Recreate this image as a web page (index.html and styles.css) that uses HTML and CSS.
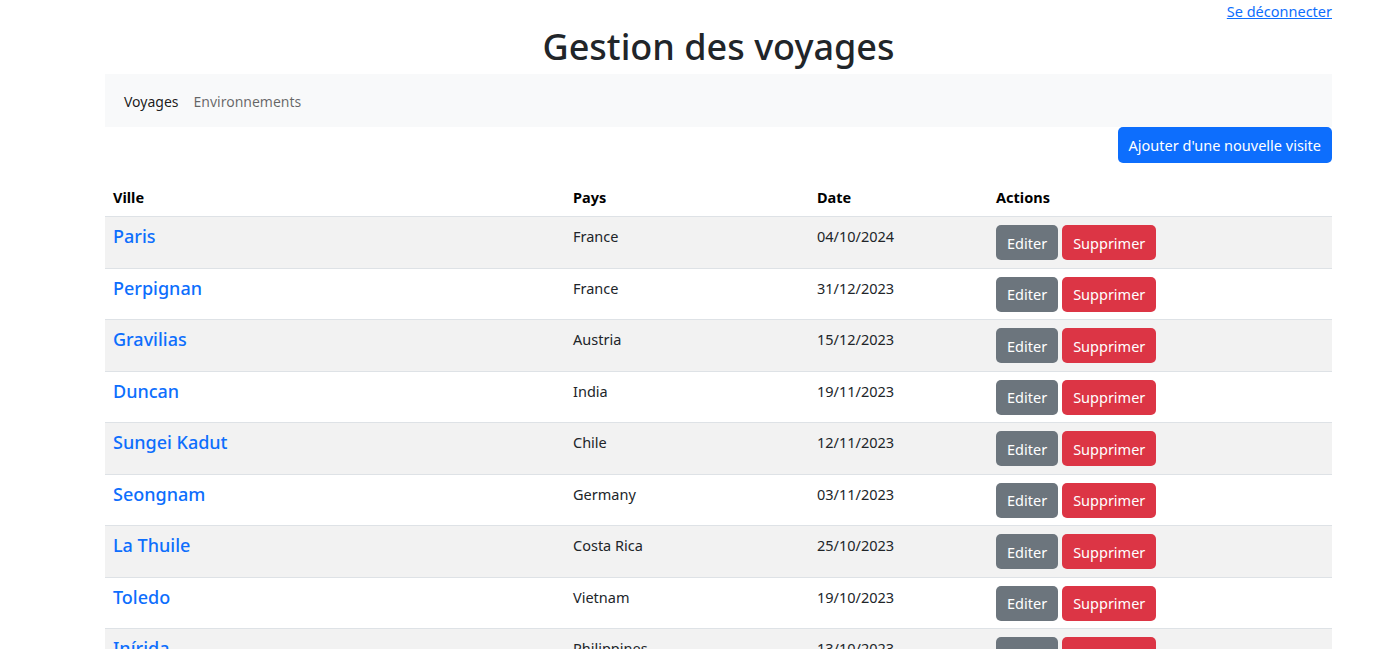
FILE: index.html
```html
<!DOCTYPE html>
<html lang="fr">
<head>
<meta charset="utf-8">
<title>Gestion des voyages</title>
<link rel="stylesheet" href="styles.css">
</head>
<body>
<div class="page">
  <div class="topbar"><a href="#" class="logout">Se déconnecter</a></div>
  <h1 class="title">Gestion des voyages</h1>
  <nav class="navbar">
    <a href="#" class="nav-link active">Voyages</a>
    <a href="#" class="nav-link">Environnements</a>
  </nav>
  <div class="toolbar"><button class="btn btn-primary">Ajouter d'une nouvelle visite</button></div>
  <table class="table">
    <thead>
      <tr><th class="c-ville">Ville</th><th class="c-pays">Pays</th><th class="c-date">Date</th><th class="c-actions">Actions</th></tr>
    </thead>
    <tbody>
      <tr><td><a href="#" class="city">Paris</a></td><td>France</td><td>04/10/2024</td><td><div class="actions"><button class="btn btn-secondary">Editer</button><button class="btn btn-danger">Supprimer</button></div></td></tr>
      <tr><td><a href="#" class="city">Perpignan</a></td><td>France</td><td>31/12/2023</td><td><div class="actions"><button class="btn btn-secondary">Editer</button><button class="btn btn-danger">Supprimer</button></div></td></tr>
      <tr><td><a href="#" class="city">Gravilias</a></td><td>Austria</td><td>15/12/2023</td><td><div class="actions"><button class="btn btn-secondary">Editer</button><button class="btn btn-danger">Supprimer</button></div></td></tr>
      <tr><td><a href="#" class="city">Duncan</a></td><td>India</td><td>19/11/2023</td><td><div class="actions"><button class="btn btn-secondary">Editer</button><button class="btn btn-danger">Supprimer</button></div></td></tr>
      <tr><td><a href="#" class="city">Sungei Kadut</a></td><td>Chile</td><td>12/11/2023</td><td><div class="actions"><button class="btn btn-secondary">Editer</button><button class="btn btn-danger">Supprimer</button></div></td></tr>
      <tr><td><a href="#" class="city">Seongnam</a></td><td>Germany</td><td>03/11/2023</td><td><div class="actions"><button class="btn btn-secondary">Editer</button><button class="btn btn-danger">Supprimer</button></div></td></tr>
      <tr><td><a href="#" class="city">La Thuile</a></td><td>Costa Rica</td><td>25/10/2023</td><td><div class="actions"><button class="btn btn-secondary">Editer</button><button class="btn btn-danger">Supprimer</button></div></td></tr>
      <tr><td><a href="#" class="city">Toledo</a></td><td>Vietnam</td><td>19/10/2023</td><td><div class="actions"><button class="btn btn-secondary">Editer</button><button class="btn btn-danger">Supprimer</button></div></td></tr>
      <tr><td><a href="#" class="city">Inírida</a></td><td>Philippines</td><td>13/10/2023</td><td><div class="actions"><button class="btn btn-secondary">Editer</button><button class="btn btn-danger">Supprimer</button></div></td></tr>
    </tbody>
  </table>
</div>
</body>
</html>
```
FILE: styles.css
```css
html, body {
  margin: 0;
  padding: 0;
  background: #fff;
}
body {
  font-family: "Noto Sans", "Open Sans", sans-serif;
  color: #212529;
  font-size: 14.5px;
}
.page {
  width: 1227px;
  margin-left: 105px;
}
.topbar {
  display: flex;
  justify-content: flex-end;
  height: 22px;
  align-items: center;
}
.logout {
  color: #0d6efd;
  text-decoration: underline;
  font-size: 14.5px;
  line-height: 20px;
}
.title {
  margin: 3px 0 6px;
  text-align: center;
  font-size: 36px;
  font-weight: 500;
  line-height: 43px;
  color: #212529;
}
.navbar {
  background: #f8f9fa;
  height: 53px;
  display: flex;
  align-items: center;
  gap: 15px;
  padding: 0 19px;
}
.nav-link {
  font-size: 14px;
  line-height: 22px;
  padding-top: 2px;
  color: rgba(0, 0, 0, 0.6);
  text-decoration: none;
}
.nav-link.active {
  color: rgba(0, 0, 0, 0.9);
}
.toolbar {
  display: flex;
  justify-content: flex-end;
  margin-bottom: 16px;
}
.btn {
  font-family: inherit;
  border: none;
  border-radius: 5px;
  color: #fff;
  font-size: 14.5px;
  padding: 0 11px;
  height: 35px;
  cursor: pointer;
}
.btn-primary {
  background: #0d6efd;
  height: 36px;
  padding: 0 11px;
}
.btn-secondary {
  background: #6c757d;
}
.btn-danger {
  background: #dc3545;
}
.table {
  width: 100%;
  border-collapse: collapse;
}
.table th {
  text-align: left;
  font-weight: 700;
  font-size: 14.5px;
  color: #000;
  padding: 8px 8px;
  line-height: 21px;
  border-bottom: 1px solid #dee2e6;
}
.c-ville { width: 444px; }
.c-pays { width: 228px; }
.c-date { width: 163px; }
.table td {
  vertical-align: top;
  padding: 7px 8px 7.5px;
  font-size: 14.5px;
  line-height: 24px;
  border-bottom: 1px solid #dee2e6;
}
.table td .actions {
  margin-top: 1px;
}
.table tbody tr:nth-child(odd) td {
  background: #f2f2f2;
}
.city {
  color: #0d6efd;
  text-decoration: none;
  font-size: 18px;
  font-weight: 500;
}
.actions {
  display: flex;
  gap: 4px;
}
```
